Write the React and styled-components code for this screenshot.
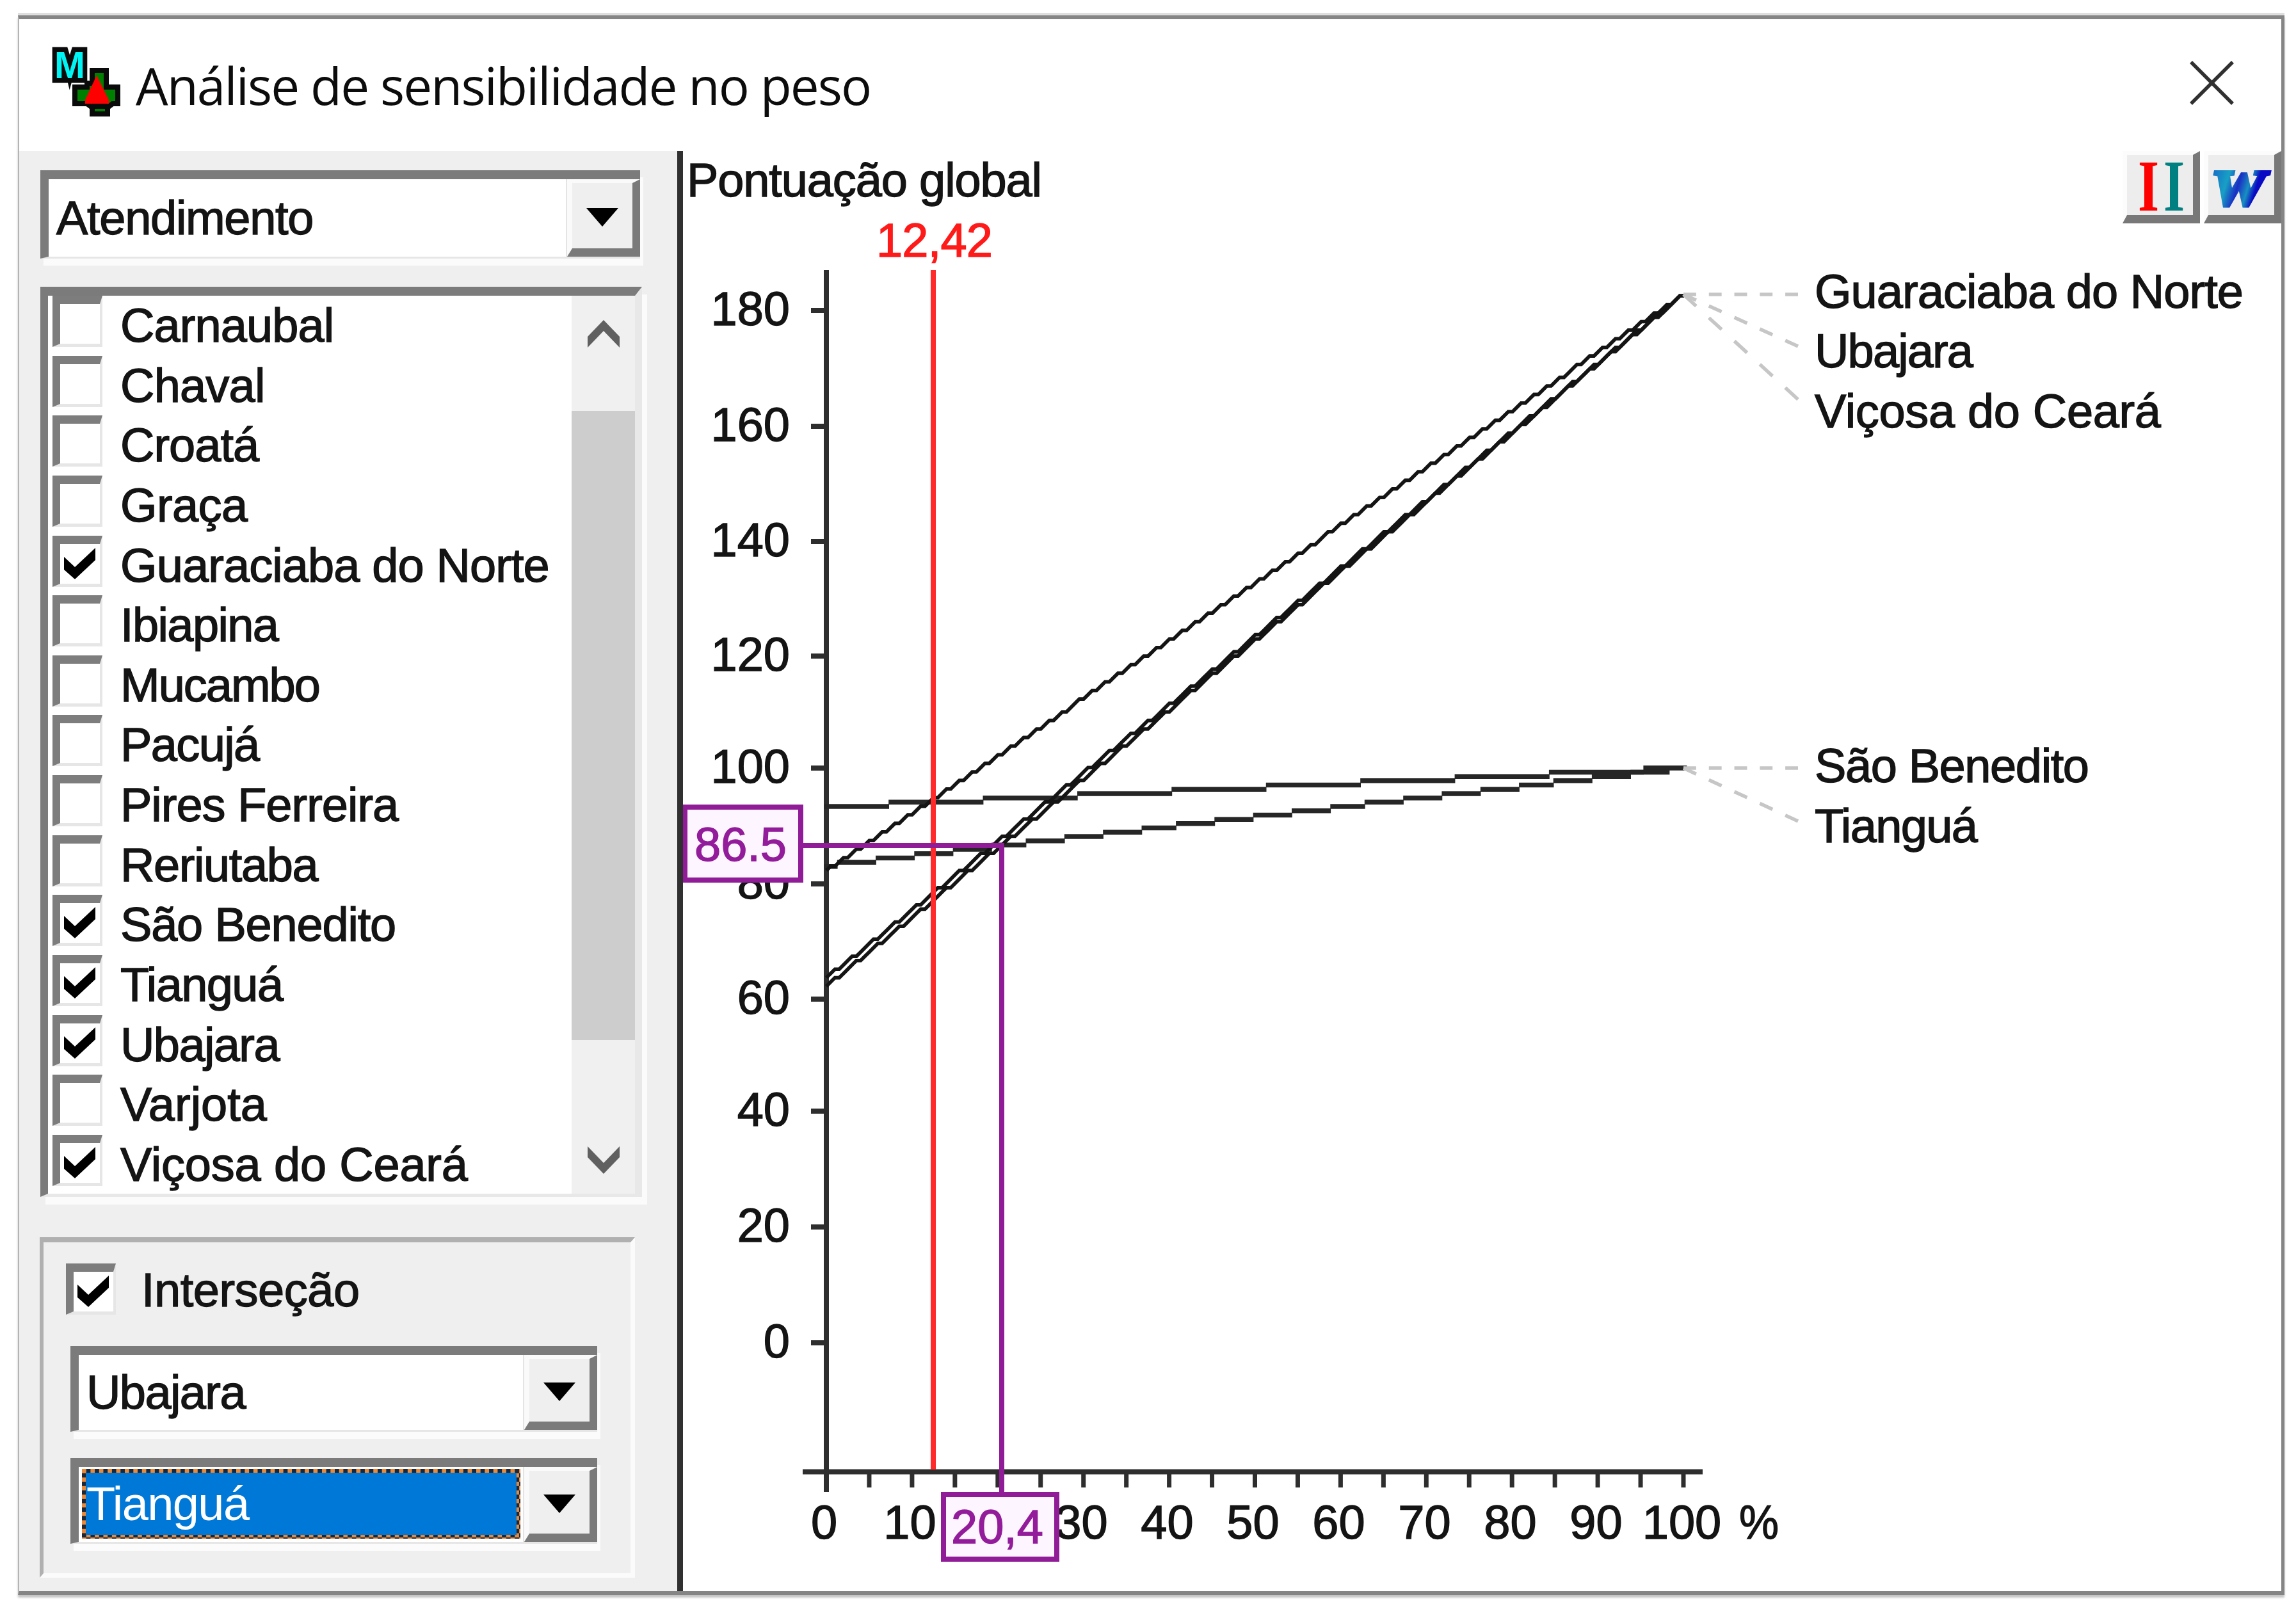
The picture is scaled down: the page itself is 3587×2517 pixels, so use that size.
import React from "react";
import styled, { createGlobalStyle, css } from "styled-components";

const GlobalStyle = createGlobalStyle`
	* {
		box-sizing: border-box;
	}
	body {
		margin: 0;
		background: #fff;
	}
`;

const UI_FONT = `"Liberation Sans", Arial, sans-serif`;

const CITIES = [
	{ name: "Carnaubal", tracking: -0.9 },
	{ name: "Chaval", tracking: -0.8 },
	{ name: "Croatá", tracking: -1 },
	{ name: "Graça", tracking: -0.6 },
	{ name: "Guaraciaba do Norte", checked: true, tracking: -0.9 },
	{ name: "Ibiapina", tracking: -1.6 },
	{ name: "Mucambo", tracking: -2 },
	{ name: "Pacujá", tracking: -1.6 },
	{ name: "Pires Ferreira", tracking: -1 },
	{ name: "Reriutaba", tracking: -1.4 },
	{ name: "São Benedito", checked: true, tracking: -1.2 },
	{ name: "Tianguá", checked: true, tracking: -1.6 },
	{ name: "Ubajara", checked: true, tracking: -1.6 },
	{ name: "Varjota" },
	{ name: "Viçosa do Ceará", checked: true, tracking: -0.2 },
];

// score with weight 0% and with weight 100%
const SERIES = [
	[93.4, 100.2],
	[83.2, 100.2],
	[82.2, 182.6],
	[63.6, 182.6],
	[62.1, 182.6],
];

const Y_TICKS = [
	[180, 485],
	[160, 666],
	[140, 846],
	[120, 1025],
	[100, 1200],
	[80, 1381],
	[60, 1561],
	[40, 1736],
	[20, 1917],
	[0, 2098],
];

const LEGEND = [
	{ name: "Guaraciaba do Norte", from: 460, to: 460, base: 481, width: 670 },
	{ name: "Ubajara", from: 460, to: 541, base: 574, width: 248 },
	{ name: "Viçosa do Ceará", from: 460, to: 624, base: 668, width: 541 },
	{ name: "São Benedito", from: 1200, to: 1200, base: 1222, width: 429 },
	{ name: "Tianguá", from: 1200, to: 1283, base: 1316, width: 255 },
];

const X0 = 1291;
const X_STEP = 66.95;
const CELL = 6.7;

const toY = (v) => 2099 - v * 8.975;

const rowAt = ([start, end], i) => {
	const a = toY(start);
	const b = toY(end);
	return Math.round((a + ((b - a) * i) / 200) / CELL);
};

// flat lines: non antialiased runs of square cells
const runsPath = (s) => {
	let d = "";
	let i = 0;
	while (i <= 200) {
		const row = rowAt(s, i);
		let j = i;
		while (j < 200 && rowAt(s, j + 1) === row) j++;
		const x = X0 + (i - 0.5) * CELL;
		const y = (row - 0.5) * CELL;
		const w = (j - i + 1) * CELL + 0.8;
		d += `M${x.toFixed(1)} ${y.toFixed(1)}h${w.toFixed(1)}v7.5h-${w.toFixed(1)}z`;
		i = j + 1;
	}
	return d;
};

// steep lines: cell centres joined one by one
const cellPoints = (s) =>
	Array.from(
		{ length: 201 },
		(_, i) => `${(X0 + i * CELL).toFixed(1)},${(rowAt(s, i) * CELL).toFixed(1)}`
	).join(" ");

const AppIcon = () => (
	<svg width="108" height="110" viewBox="81 73 108 110" overflow="visible">
		<path
			d="M144 110h22v26h18v26h-8l-8 6v10h-24v-10l-8-6h-19v-26h19v-6h8z"
			fill="#008000"
			stroke="#0a0a0a"
			strokeWidth="8"
		/>
		<path d="M144 162h24v8h-24z" fill="#0a0a0a" />
		<path d="M151 118L133 156v6h37v-6z" fill="#f00" />
		<text
			x="85"
			y="122"
			fontFamily="Liberation Sans"
			fontWeight="bold"
			fontSize="60"
			textLength="48"
			lengthAdjust="spacingAndGlyphs"
			fill="#00f4f4"
			stroke="#0a0a0a"
			strokeWidth="15"
			paintOrder="stroke"
		>
			M
		</text>
	</svg>
);

const CheckMark = () => (
	<svg width="49" height="49" viewBox="0 0 49 49">
		<path d="M0 14L17 30L49 0V19L17 49L0 34Z" fill="#000" />
	</svg>
);

const Check = ({ checked }) => <Box>{checked && <CheckMark />}</Box>;

const Select = ({ value, focused, width, height = 134, tracking }) => (
	<Combo $width={width} $height={height}>
		<Value $focused={focused}>
			<Label $focused={focused} $tracking={tracking}>
				{value}
			</Label>
		</Value>
		<DropButton>
			<svg width="50" height="29" viewBox="0 0 50 29">
				<path d="M0 0h50L25 29z" fill="#000" />
			</svg>
		</DropButton>
	</Combo>
);

const Chevron = ({ down }) => (
	<svg width="50" height="43" viewBox="0 0 50 43">
		<path
			d={down ? "M0 0L25 26L50 0V17L25 43L0 17Z" : "M0 43L25 17L50 43V26L25 0L0 26Z"}
			fill="#606060"
		/>
	</svg>
);

const Chart = () => (
	<ChartSvg viewBox="1067 236 2497 2250">
		<text x="1073" y="307" textLength="555">
			Pontuação global
		</text>
		<text x="1369" y="401" textLength="182" fill="#ff1a1a" stroke="#ff1a1a">
			12,42
		</text>

		<g fill="none" stroke="#2e2e2e" strokeWidth="8">
			<path d="M1291 422V2331" />
			<path d="M1254 2299.5H2660" />
			{Y_TICKS.map(([label, y]) => (
				<path key={label} d={`M1267 ${y}H1291`} />
			))}
			{Array.from({ length: 20 }, (_, i) => (
				<path key={i} d={`M${X0 + (i + 1) * X_STEP} 2299V2324`} strokeWidth="7" />
			))}
		</g>

		{Y_TICKS.map(([label, y]) => (
			<text key={label} x="1234" y={y + 23} textAnchor="end">
				{label}
			</text>
		))}
		{Array.from({ length: 11 }, (_, i) => (
			<text key={i} x={1287.5 + i * 134} y="2404" textAnchor="middle">
				{i * 10}
			</text>
		))}
		<text x="2748" y="2404" textAnchor="middle" textLength="62" lengthAdjust="spacingAndGlyphs">
			%
		</text>

		{SERIES.slice(0, 2).map((s) => (
			<path key={s[0]} d={runsPath(s)} fill="#262626" />
		))}
		{SERIES.slice(2).map((s) => (
			<polyline
				key={s[0]}
				points={cellPoints(s)}
				fill="none"
				stroke="#141414"
				strokeWidth="5.6"
			/>
		))}
		<path d="M1458 422V2296" stroke="#ff2a2a" strokeWidth="8" />

		{LEGEND.map(({ name, from, to, base, width }) => (
			<g key={name}>
				<path
					d={`M2630 ${from}L2809 ${to}`}
					stroke="#c6c6c6"
					strokeWidth="5.5"
					pathLength="27"
					strokeDasharray="3 3"
				/>
				<text x="2835" y={base} textLength={width}>
					{name}
				</text>
			</g>
		))}

		<g fill="#fdf5ff" stroke="#901c97" strokeWidth="8">
			<path d="M1254 1321H1565V2331" fill="none" />
			<rect x="1070" y="1261" width="181" height="114" />
			<rect x="1474" y="2335" width="177" height="101" />
		</g>
		<g fill="#931c9a" stroke="#931c9a">
			<text x="1085" y="1345" textLength="144">
				86.5
			</text>
			<text x="1486" y="2411" textLength="144">
				20,4
			</text>
		</g>
	</ChartSvg>
);

const App = () => {
	return (
		<Screen>
			<GlobalStyle />
			<Window>
				<TitleBar>
					<AppIcon />
					<Title>Análise de sensibilidade no peso</Title>
					<CloseButton>
						<svg width="70" height="70" viewBox="0 0 70 70">
							<path d="M2 2L67 67M67 2L2 67" stroke="#303030" strokeWidth="5.5" />
						</svg>
					</CloseButton>
				</TitleBar>
				<Body>
					<Sidebar>
						<Select value="Atendimento" width={937} height={138} tracking={-1.3} />
						<ListBox>
							<Rows>
								{CITIES.map(({ name, checked, tracking }) => (
									<Row key={name}>
										<Check checked={checked} />
										<Label $tracking={tracking}>{name}</Label>
									</Row>
								))}
							</Rows>
							<ScrollBar>
								<Chevron />
								<Thumb />
								<Chevron down />
							</ScrollBar>
						</ListBox>
						<Group>
							<GroupHead>
								<Check checked />
								<Label $tracking={-0.5}>Interseção</Label>
							</GroupHead>
							<Select value="Ubajara" width={823} tracking={-1.6} />
							<Select value="Tianguá" width={823} tracking={-1.6} focused />
						</Group>
					</Sidebar>
					<ChartPane>
						<Chart />
						<Tools>
							<ToolButton>
								<svg width="105" height="101" viewBox="3324 235 105 101" overflow="visible">
									<g
										fontFamily="Liberation Serif"
										fontWeight="bold"
										fontSize="114"
									>
										<text x="3341" y="329" fill="#f00" textLength="33" lengthAdjust="spacingAndGlyphs">
											I
										</text>
										<text x="3381" y="329" fill="#008080" textLength="33" lengthAdjust="spacingAndGlyphs">
											I
										</text>
									</g>
								</svg>
							</ToolButton>
							<ToolButton>
								<svg width="105" height="101" viewBox="3452 235 105 101" overflow="visible">
									<defs>
										<linearGradient id="word" x1="0" y1="0" x2="1" y2="0.3">
											<stop offset="0" stopColor="#1560c8" />
											<stop offset="0.35" stopColor="#18a0c4" />
											<stop offset="0.55" stopColor="#1a2fc4" />
											<stop offset="0.72" stopColor="#1890c0" />
											<stop offset="0.85" stopColor="#0a0ac4" />
										</linearGradient>
									</defs>
									<text
										x="3457"
										y="320"
										fontFamily="Liberation Serif"
										fontWeight="bold"
										fontStyle="italic"
										fontSize="78"
										textLength="84"
										lengthAdjust="spacingAndGlyphs"
										fill="url(#word)"
										stroke="url(#word)"
										strokeWidth="6"
									>
										W
									</text>
								</svg>
							</ToolButton>
						</Tools>
					</ChartPane>
				</Body>
			</Window>
		</Screen>
	);
};

export default App;

const Screen = styled.div`
	width: 3587px;
	height: 2517px;
	padding: 24px 18px 25px 28px;
	background: #fff;
	overflow: hidden;
`;

const Window = styled.div`
	height: 2468px;
	border: solid #858585;
	border-width: 6px 5px 6px 2px;
	border-left-color: #b4b4b4;
	box-shadow: 0 -4px 0 #dedede, 0 4px 3px #c4c4c4;
	background: #fff;
`;

const TitleBar = styled.div`
	height: 206px;
	display: flex;
	align-items: flex-start;
	padding: 43px 73px 0 51px;
`;

const Title = styled.span`
	margin: -8px 0 0 23px;
	font-family: "Open Sans", "Noto Sans", sans-serif;
	font-size: 80px;
	line-height: 136px;
	letter-spacing: -1.9px;
	white-space: nowrap;
	color: #0c0c0c;
`;

const CloseButton = styled.div`
	margin: 22px 0 0 auto;
`;

const Body = styled.div`
	display: flex;
	height: 2250px;
`;

const Sidebar = styled.div`
	width: 1037px;
	flex: none;
	padding: 30px 0 0 33px;
	border-right: 9px solid #303030;
	background: #efefef;
	display: flex;
	flex-direction: column;
	align-items: flex-start;
`;

const Label = styled.span`
	font-family: ${UI_FONT};
	font-size: 74px;
	line-height: 93px;
	letter-spacing: ${({ $tracking = 0 }) => $tracking}px;
	white-space: nowrap;
	color: ${({ $focused }) => ($focused ? "#fff" : "#141414")};
	-webkit-text-stroke: ${({ $focused }) => ($focused ? 0 : "1.4px #141414")};
`;

const Combo = styled.div`
	width: ${({ $width }) => $width}px;
	height: ${({ $height }) => $height}px;
	flex: none;
	display: flex;
	border: 0 solid #7b7b7b;
	border-width: 14px 0 3px 13px;
	border-bottom-color: #e6e6e6;
	box-shadow: 5px 11px 0 #fbfbfb;
	background: #fff;
`;

const Value = styled.div`
	flex: 1;
	display: flex;
	align-items: center;
	padding: 0 0 0 12px;
	${({ $focused }) =>
		$focused &&
		css`
			margin: 3px 6px 5px 5px;
			padding: 0 0 0 1px;
			border: 6px solid transparent;
			background: linear-gradient(#0078d7, #0078d7) padding-box,
				repeating-conic-gradient(#17283c 0 25%, #e88838 0 50%) 0 0 / 13.4px 13.4px
					border-box;
		`}
`;

const DropButton = styled.div`
	width: 114px;
	display: flex;
	justify-content: center;
	align-items: center;
	padding-top: 5px;
	background: #efefef;
	border: solid #7a7a7a;
	border-width: 6px 12px 13px 8px;
	border-top-color: #fafafa;
	border-left-color: #fafafa;
	box-shadow: -2px 0 0 #e4e4e4;
`;

const ListBox = styled.div`
	width: 940px;
	height: 1422px;
	margin-top: 44px;
	flex: none;
	display: flex;
	border: solid #7b7b7b;
	border-width: 14px 11px 5px 12px;
	border-right-color: #e8e8e8;
	border-bottom-color: #e8e8e8;
	box-shadow: 8px 12px 0 #fbfbfb;
	background: #fff;
	overflow: hidden;
`;

const Rows = styled.div`
	flex: 1;
	padding-left: 7px;
`;

const Row = styled.div`
	height: 93.65px;
	display: flex;
	align-items: flex-start;
	gap: 28px;
`;

const Box = styled.div`
	width: 78px;
	height: 80px;
	flex: none;
	display: flex;
	padding: 6px 0 0 6px;
	border: solid #7d7d7d;
	border-width: 13px 4px 5px 12px;
	border-right-color: #e6e6e6;
	border-bottom-color: #e6e6e6;
	background: #fff;
`;

const ScrollBar = styled.div`
	width: 99px;
	display: flex;
	flex-direction: column;
	align-items: center;
	padding-top: 38px;
	background: #f0f0f0;
`;

const Thumb = styled.div`
	width: 99px;
	height: 983px;
	margin: 99px 0 166px;
	flex: none;
	background: #cdcdcd;
`;

const Group = styled.div`
	width: 930px;
	height: 532px;
	margin-top: 63px;
	margin-left: -1px;
	padding: 33px 0 0 42px;
	border: solid #b0b0b0;
	border-width: 8px 7px 7px 6px;
	border-right-color: #fbfbfb;
	border-bottom-color: #fbfbfb;
	display: flex;
	flex-direction: column;
	align-items: flex-start;

	${Combo} + ${Combo} {
		margin-top: 41px;
	}
`;

const GroupHead = styled.div`
	height: 129px;
	margin-left: -7px;
	display: flex;
	align-items: flex-start;
	gap: 40px;

	${Label} {
		margin-top: -5px;
	}
`;

const ChartPane = styled.div`
	width: 2497px;
	position: relative;
`;

const ChartSvg = styled.svg`
	display: block;
	width: 2497px;
	height: 2250px;
	font-family: ${UI_FONT};
	font-size: 74px;
	fill: #141414;

	text {
		stroke-width: 1.4px;
	}
	> text:not([stroke]),
	g > text[x="2835"] {
		stroke: #141414;
	}
`;

/* floats over the top right corner of the chart */
const Tools = styled.div`
	position: absolute;
	top: 0;
	right: 0;
	display: flex;
	gap: 6px;
`;

const ToolButton = styled.div`
	width: 121px;
	height: 113px;
	overflow: hidden;
	background: #ededed;
	border: solid #787878;
	border-width: 6px 11px 13px 7px;
	border-top-color: #fcfcfc;
	border-left-color: #fcfcfc;

	svg {
		display: block;
		margin-top: -7px;
	}
`;
